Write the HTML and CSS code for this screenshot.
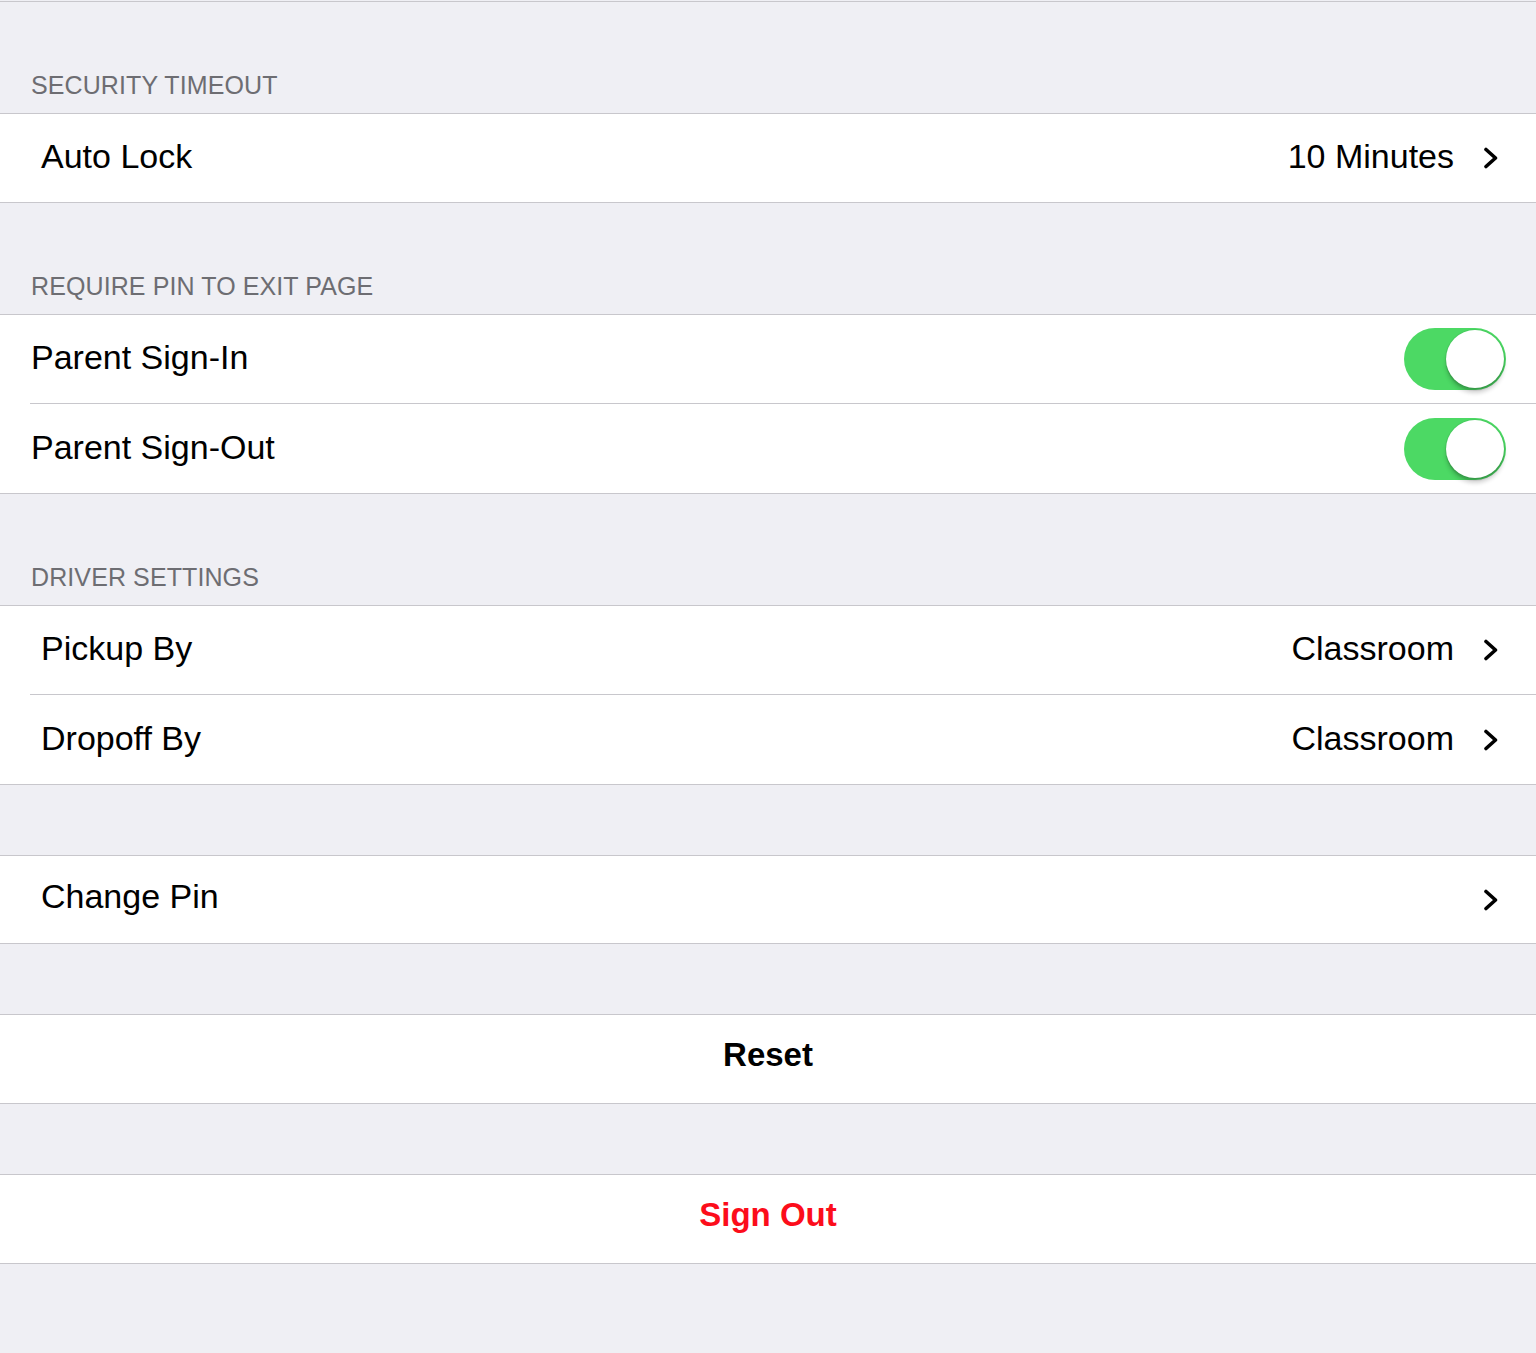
FILE: index.html
```html
<!DOCTYPE html>
<html lang="en">
<head>
<meta charset="utf-8">
<title>Settings</title>
<link rel="stylesheet" href="styles.css">
</head>
<body>
<div class="page">
  <div class="header">SECURITY TIMEOUT</div>
  <div class="group">
    <div class="row pad-wide">
      <span class="label">Auto Lock</span>
      <span class="value">10 Minutes</span>
      <svg class="chev" viewBox="0 0 16 22" width="16" height="22"><polyline points="3,2.5 12.5,11 3,19.5"/></svg>
    </div>
  </div>

  <div class="header">REQUIRE PIN TO EXIT PAGE</div>
  <div class="group">
    <div class="row pad-narrow">
      <span class="label">Parent Sign-In</span>
      <span class="toggle"><span class="knob"></span></span>
    </div>
    <div class="sep"></div>
    <div class="row tall pad-narrow">
      <span class="label">Parent Sign-Out</span>
      <span class="toggle"><span class="knob"></span></span>
    </div>
  </div>

  <div class="header">DRIVER SETTINGS</div>
  <div class="group">
    <div class="row pad-wide">
      <span class="label">Pickup By</span>
      <span class="value">Classroom</span>
      <svg class="chev" viewBox="0 0 16 22" width="16" height="22"><polyline points="3,2.5 12.5,11 3,19.5"/></svg>
    </div>
    <div class="sep"></div>
    <div class="row tall pad-wide">
      <span class="label">Dropoff By</span>
      <span class="value">Classroom</span>
      <svg class="chev" viewBox="0 0 16 22" width="16" height="22"><polyline points="3,2.5 12.5,11 3,19.5"/></svg>
    </div>
  </div>

  <div class="gap"></div>
  <div class="group">
    <div class="row short pad-wide">
      <span class="label raised">Change Pin</span>
      <svg class="chev" viewBox="0 0 16 22" width="16" height="22"><polyline points="3,2.5 12.5,11 3,19.5"/></svg>
    </div>
  </div>

  <div class="gap"></div>
  <div class="group">
    <div class="row action">Reset</div>
  </div>

  <div class="gap"></div>
  <div class="group">
    <div class="row action danger">Sign Out</div>
  </div>
</div>
</body>
</html>
```

FILE: styles.css
```css
html, body {
  margin: 0;
  padding: 0;
  background: #efeff4;
  font-family: "Liberation Sans", Arial, sans-serif;
}

.page {
  min-height: 1353px;
  margin-top: 1px;
  border-top: 1px solid #c8c7cc;
  box-sizing: border-box;
}

.header {
  height: 111px;
  box-sizing: border-box;
  display: flex;
  align-items: flex-end;
  padding: 0 0 13px 31px;
  font-size: 25px;
  line-height: 30px;
  letter-spacing: 0.1px;
  color: #6d6d72;
}

.gap {
  height: 70px;
}

.group {
  background: #fff;
  border-top: 1px solid #c8c7cc;
  border-bottom: 1px solid #c8c7cc;
}

.row {
  height: 88px;
  box-sizing: border-box;
  display: flex;
  align-items: center;
  font-size: 34px;
  color: #000;
}

.row.tall {
  height: 89px;
}

.row.short {
  height: 87px;
}

.pad-wide {
  padding: 0 37px 0 41px;
}

.pad-narrow {
  padding: 0 30px 0 31px;
}

.label {
  flex: 1;
  padding-bottom: 3px;
}

.label.raised {
  padding-bottom: 7px;
}

.value {
  margin-right: 29px;
  padding-bottom: 3px;
}

.chev {
  display: block;
  flex: none;
}

.chev polyline {
  fill: none;
  stroke: #000;
  stroke-width: 3.6;
  stroke-linecap: round;
  stroke-linejoin: round;
}

.sep {
  height: 1px;
  margin-left: 30px;
  background: #c8c7cc;
}

.toggle {
  position: relative;
  width: 102px;
  height: 62px;
  border-radius: 31px;
  background: #4cd964;
  flex: none;
}

.knob {
  position: absolute;
  top: 2px;
  right: 2px;
  width: 58px;
  height: 58px;
  border-radius: 50%;
  background: #fff;
  box-shadow: 0 0 0 1px rgba(0, 0, 0, 0.06), 0 5px 4px rgba(0, 0, 0, 0.18), 0 3px 1px rgba(0, 0, 0, 0.08);
}

.action {
  justify-content: center;
  font-size: 33px;
  font-weight: bold;
  padding-bottom: 8px;
}

.danger {
  color: #fc0d1b;
}
```
